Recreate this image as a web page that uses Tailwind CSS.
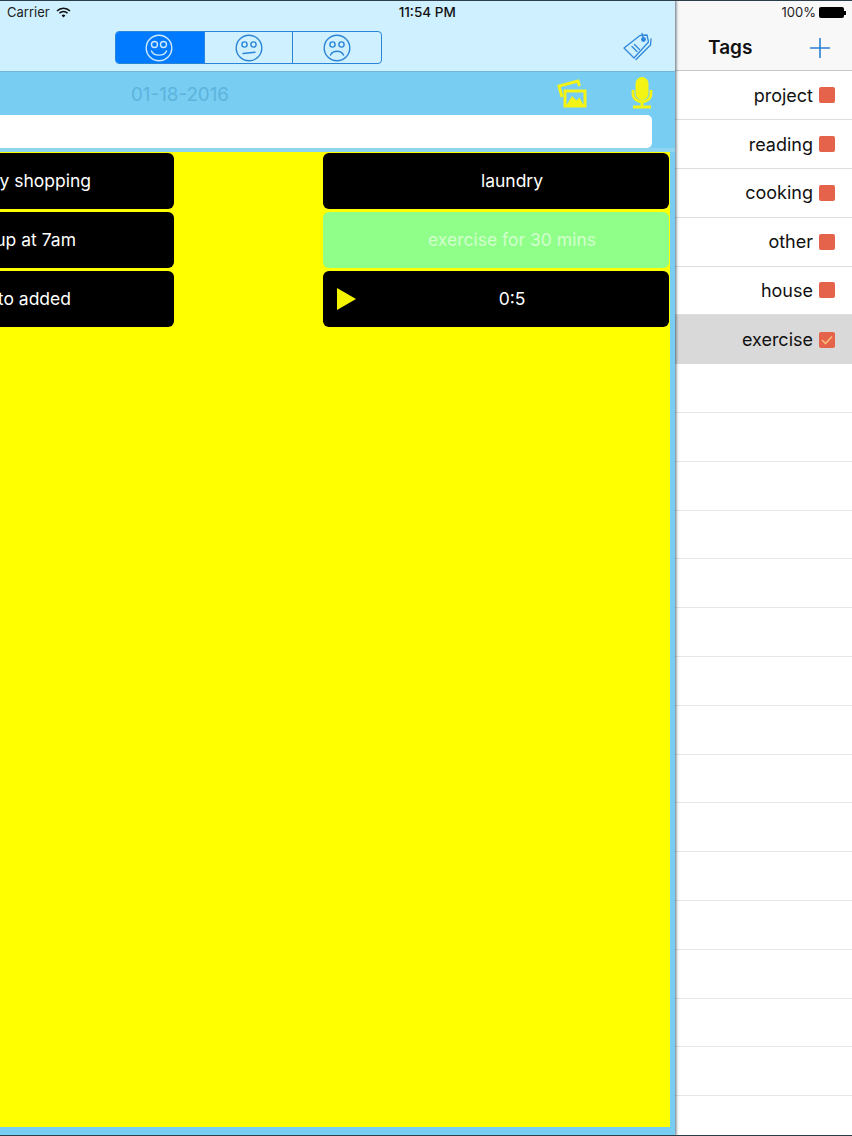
<!DOCTYPE html>
<html lang="en">
<head>
  <meta charset="UTF-8" />
  <title>Tags</title>
  <script src="https://cdn.jsdelivr.net/npm/@tailwindcss/browser@4"></script>
</head>
<body class="m-0 bg-white">
  <div class="relative w-[852px] h-[1136px] overflow-hidden flex font-['Inter',sans-serif] text-[#111]">

    <!-- status bar lies over both panes -->
    <div class="absolute top-0 left-0 w-full h-[24px] z-20 flex items-center pl-[7px] pr-[7px] text-[13px] border-t border-[#2c3e4a]">
      <span class="text-[#222]">Carrier</span>
      <svg class="ml-[6px] mt-[-1px]" width="15" height="11" viewBox="0 0 15 11" fill="none" stroke="#111" stroke-width="1.5">
        <path d="M1 4a9 9 0 0 1 13 0" />
        <path d="M3.4 6.3a5.6 5.6 0 0 1 8.2 0" />
        <path d="M7.5 10.5 5.6 8.4a2.6 2.6 0 0 1 3.8 0z" fill="#111" stroke="none" />
      </svg>
      <span class="ml-[328px] font-medium text-[13.5px]">11:54 PM</span>
      <span class="ml-auto text-[#222] text-[13px]">100%</span>
      <span class="ml-[3px] mr-[-1px] flex items-center">
        <span class="block w-[25px] h-[11px] bg-black rounded-[2px]"></span>
        <span class="block w-[2px] h-[4px] bg-black"></span>
      </span>
    </div>

    <!-- left pane -->
    <div class="relative z-10 w-[675px] h-full flex flex-col bg-[#78cdf3] shadow-[1px_0_3px_rgba(30,50,70,0.75)]">
      <div class="h-[72px] shrink-0 bg-[#cff0fe] border-b border-[#6fb6da] pt-[31px] pl-[115px] pr-[22px] flex items-start justify-between">
        <div class="flex w-[267px] h-[33px] border border-[#2a85d8] rounded-[4px] overflow-hidden">
          <div class="w-[88px] bg-[#007aff] flex items-center justify-center">
            <svg class="ml-[-2px]" width="28" height="28" viewBox="0 0 28 28" fill="none" stroke="#cfeaff" stroke-width="1.4">
              <circle cx="14" cy="14" r="12.8" />
              <circle cx="9.5" cy="10.5" r="3" />
              <circle cx="18.5" cy="10.5" r="3" />
              <path d="M6.5 17c2 5.5 13 5.5 15 0" stroke-linecap="round" />
            </svg>
          </div>
          <div class="w-[89px] border-l border-r border-[#2a85d8] flex items-center justify-center">
            <svg width="28" height="28" viewBox="0 0 28 28" fill="none" stroke="#2a85d8" stroke-width="1.4">
              <circle cx="14" cy="14" r="12.8" />
              <circle cx="9.5" cy="10.5" r="2.6" />
              <circle cx="18.5" cy="10.5" r="2.6" />
              <path d="M8 19.5l12-1.2" stroke-linecap="round" />
            </svg>
          </div>
          <div class="flex-1 flex items-center justify-center">
            <svg width="28" height="28" viewBox="0 0 28 28" fill="none" stroke="#2a85d8" stroke-width="1.4">
              <circle cx="14" cy="14" r="12.8" />
              <circle cx="9.5" cy="10.5" r="2.6" />
              <circle cx="18.5" cy="10.5" r="2.6" />
              <path d="M7.5 21c2.5-5 10.5-5 13 0" stroke-linecap="round" />
            </svg>
          </div>
        </div>
        <svg class="mt-[1px]" width="30" height="30" viewBox="0 0 30 30" fill="none" stroke="#2f87dc" stroke-width="1.3" stroke-linejoin="round" stroke-linecap="round">
          <path d="M1 16 17 3.5l7-.5 1.5 7L11 26z" />
          <path d="M13 27.5 27.5 13l.5-6" />
          <circle cx="20.5" cy="7.5" r="1.8" fill="#2f87dc" />
          <path d="M20.5 7 19 1.5" />
          <path d="M9 14.5l5 5M11.5 12.5l5 5" />
        </svg>
      </div>

      <div class="h-[43px] shrink-0 relative flex items-center">
        <span class="ml-[131px] mt-[3px] text-[#5cb4dc] text-[18.8px] leading-none">01-18-2016</span>
        <svg class="ml-auto mt-[1px]" width="32" height="30" viewBox="0 0 32 30" fill="none" stroke="#f4f414" stroke-width="3" stroke-linejoin="miter">
          <path d="M6 18 3 7l19-5 1.5 5" />
          <path d="M9 12h20v15H9z" fill="#78cdf3" />
          <path d="M10 27 16 17l4.5 4.5 3-3L28 27z" fill="#f4f414" stroke="none" />
        </svg>
        <svg class="ml-[43px] mr-[22px] mt-[-1px]" width="22" height="32" viewBox="0 0 22 32" fill="none">
          <rect x="4.5" y="0" width="13" height="23" rx="6.5" fill="#f4f414" />
          <path d="M2 13v3.5c0 11 18 11 18 0V13" stroke="#f4f414" stroke-width="2.8" />
          <path d="M11 25v4" stroke="#f4f414" stroke-width="3" />
          <rect x="2" y="28.5" width="18" height="3" fill="#f4f414" />
        </svg>
      </div>

      <div class="h-[33px] shrink-0 w-[652px] bg-white rounded-r-[5px]"></div>
      <div class="h-[4px] shrink-0 bg-[#8fd5f0]"></div>

      <div class="w-[670px] h-[975px] bg-[#ffff00] pt-[1px] grid grid-cols-[174px_346px] gap-x-[149px] gap-y-[3.5px] content-start whitespace-nowrap text-[17.5px]">
        <div class="h-[55.5px] bg-black rounded-r-[6px] flex items-center justify-end pr-[83px] pt-[1px] text-white">y shopping</div>
        <div class="h-[55.5px] bg-black rounded-[6px] flex items-center justify-center pl-[32px] pt-[1px] text-white">laundry</div>
        <div class="h-[55.5px] bg-black rounded-r-[6px] flex items-center justify-end pr-[98px] pt-[1px] text-white">up at 7am</div>
        <div class="h-[55.5px] bg-[#90ff8a] rounded-[6px] flex items-center justify-center pl-[32px] pt-[1px] text-[#d2ffcc]">exercise for 30 mins</div>
        <div class="h-[55.5px] bg-black rounded-r-[6px] flex items-center justify-end pr-[103px] text-white">to added</div>
        <div class="relative h-[55.5px] bg-black rounded-[6px] flex items-center justify-center pl-[32px] text-white">
          <svg class="absolute left-[14px] top-[17px]" width="19" height="22" viewBox="0 0 19 22"><path d="M0 0 19 11 0 22z" fill="#f4f400" /></svg>
          0:5
        </div>
      </div>
    </div>

    <!-- tags pane -->
    <div class="flex-1 h-full flex flex-col bg-white text-[18px]">
      <div class="h-[71.4px] shrink-0 bg-[#f8f8f8] border-b border-[#c8c8c8] pt-[25px] pl-[33px] pr-[21px] flex items-center justify-between">
        <span class="font-semibold text-[19px] mt-[1px]">Tags</span>
        <svg width="22" height="22" viewBox="0 0 22 22" stroke="#2b80d4" stroke-width="1.6"><path d="M11 1v20M1 11h20" /></svg>
      </div>
      <div class="h-[48.8px] shrink-0 border-b border-[#dedede] flex items-center justify-end pr-[17px] gap-[6px]">project <span class="w-[16px] h-[16px] rounded-[2px] bg-[#e5634a]"></span></div>
      <div class="h-[48.8px] shrink-0 border-b border-[#dedede] flex items-center justify-end pr-[17px] gap-[6px]">reading <span class="w-[16px] h-[16px] rounded-[2px] bg-[#e5634a]"></span></div>
      <div class="h-[48.8px] shrink-0 border-b border-[#dedede] flex items-center justify-end pr-[17px] gap-[6px]">cooking <span class="w-[16px] h-[16px] rounded-[2px] bg-[#e5634a]"></span></div>
      <div class="h-[48.8px] shrink-0 border-b border-[#dedede] flex items-center justify-end pr-[17px] gap-[6px]">other <span class="w-[16px] h-[16px] rounded-[2px] bg-[#e5634a]"></span></div>
      <div class="h-[48.8px] shrink-0 border-b border-[#dedede] flex items-center justify-end pr-[17px] gap-[6px]">house <span class="w-[16px] h-[16px] rounded-[2px] bg-[#e5634a]"></span></div>
      <div class="h-[48.8px] shrink-0 bg-[#d9d9d9] flex items-center justify-end pr-[17px] gap-[6px]">exercise
        <span class="w-[16px] h-[16px] rounded-[2px] bg-[#e5634a] flex items-center justify-center">
          <svg width="12" height="10" viewBox="0 0 12 10" fill="none" stroke="#f9bd7a" stroke-width="1.6"><path d="M1 5l3.5 3.5L11 1.5" /></svg>
        </span>
      </div>
      <div class="h-[48.8px] shrink-0 border-b border-[#e6e6e6]"></div>
      <div class="h-[48.8px] shrink-0 border-b border-[#e6e6e6]"></div>
      <div class="h-[48.8px] shrink-0 border-b border-[#e6e6e6]"></div>
      <div class="h-[48.8px] shrink-0 border-b border-[#e6e6e6]"></div>
      <div class="h-[48.8px] shrink-0 border-b border-[#e6e6e6]"></div>
      <div class="h-[48.8px] shrink-0 border-b border-[#e6e6e6]"></div>
      <div class="h-[48.8px] shrink-0 border-b border-[#e6e6e6]"></div>
      <div class="h-[48.8px] shrink-0 border-b border-[#e6e6e6]"></div>
      <div class="h-[48.8px] shrink-0 border-b border-[#e6e6e6]"></div>
      <div class="h-[48.8px] shrink-0 border-b border-[#e6e6e6]"></div>
      <div class="h-[48.8px] shrink-0 border-b border-[#e6e6e6]"></div>
      <div class="h-[48.8px] shrink-0 border-b border-[#e6e6e6]"></div>
      <div class="h-[48.8px] shrink-0 border-b border-[#e6e6e6]"></div>
      <div class="h-[48.8px] shrink-0 border-b border-[#e6e6e6]"></div>
      <div class="h-[48.8px] shrink-0 border-b border-[#e6e6e6]"></div>
    </div>

    <div class="absolute bottom-0 left-0 w-full h-[1px] bg-[#2c3e4a] z-20"></div>
  </div>
</body>
</html>
